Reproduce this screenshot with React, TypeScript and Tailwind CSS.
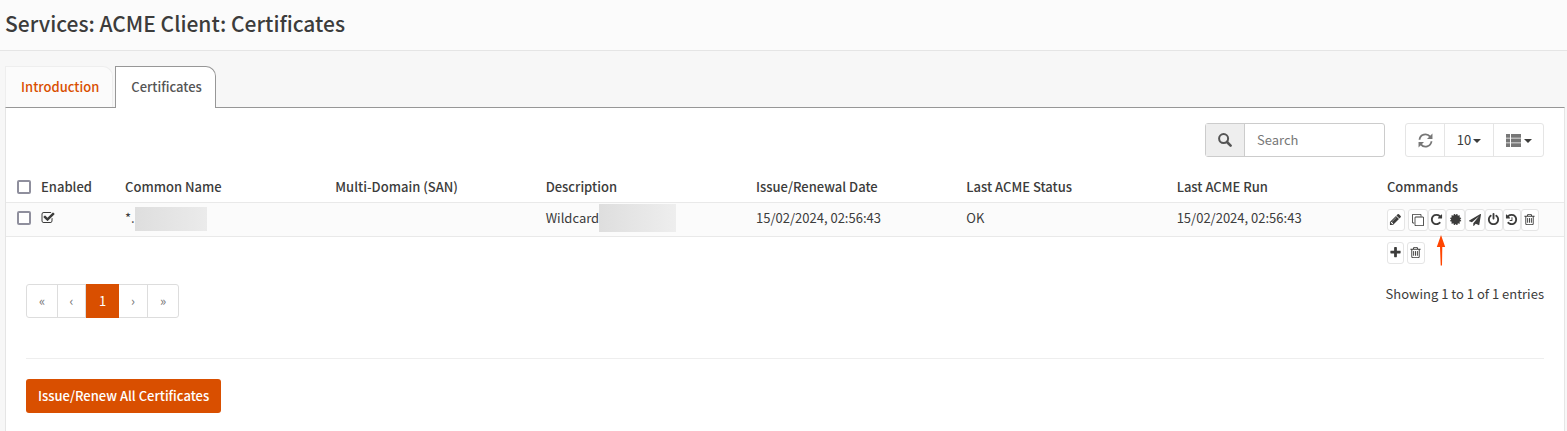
import React from "react";

type IconProps = { d: string; size?: string };

function Icon({ d, size = "size-[13px]" }: IconProps) {
  return (
    <svg viewBox="0 0 1792 1792" className={`${size} shrink-0`} fill="currentColor" aria-hidden="true">
      <path d={d} />
    </svg>
  );
}

const TRASH =
  "M704 736v576q0 14-9 23t-23 9h-64q-14 0-23-9t-9-23v-576q0-14 9-23t23-9h64q14 0 23 9t9 23zm256 0v576q0 14-9 23t-23 9h-64q-14 0-23-9t-9-23v-576q0-14 9-23t23-9h64q14 0 23 9t9 23zm256 0v576q0 14-9 23t-23 9h-64q-14 0-23-9t-9-23v-576q0-14 9-23t23-9h64q14 0 23 9t9 23zm128 724v-948h-896v948q0 22 7 40.5t14.5 27 10.5 8.5h832q3 0 10.5-8.5t14.5-27 7-40.5zm-672-1076h448l-48-117q-7-9-17-11h-317q-10 2-17 11zm928 32v64q0 14-9 23t-23 9h-96v948q0 83-47 143.5t-113 60.5h-832q-66 0-113-58.5t-47-141.5v-952h-96q-14 0-23-9t-9-23v-64q0-14 9-23t23-9h309l70-167q15-37 54-63t79-26h320q40 0 79 26t54 63l70 167h309q14 0 23 9t9 23z";
const PENCIL =
  "M491 1536l91-91-235-235-91 91v107h128v128h107zm523-928q0-22-22-22-10 0-17 7l-542 542q-7 7-7 17 0 22 22 22 10 0 17-7l542-542q7-7 7-17zm-54-192l416 416-832 832h-416v-416zm683 96q0 53-37 90l-166 166-416-416 166-165q36-38 90-38 53 0 91 38l235 234q37 39 37 91z";
const CLONE =
  "M1664 1632v-1088q0-13-9.5-22.5t-22.5-9.5h-1088q-13 0-22.5 9.5t-9.5 22.5v1088q0 13 9.5 22.5t22.5 9.5h1088q13 0 22.5-9.5t9.5-22.5zm128-1088v1088q0 66-47 113t-113 47h-1088q-66 0-113-47t-47-113v-1088q0-66 47-113t113-47h1088q66 0 113 47t47 113zm-384-384v160h-128v-160q0-13-9.5-22.5t-22.5-9.5h-1088q-13 0-22.5 9.5t-9.5 22.5v1088q0 13 9.5 22.5t22.5 9.5h160v128h-160q-66 0-113-47t-47-113v-1088q0-66 47-113t113-47h1088q66 0 113 47t47 113z";
const REPEAT =
  "M1664 256v448q0 26-19 45t-45 19h-448q-42 0-59-40-17-39 14-69l138-138q-148-137-349-137-104 0-198.5 40.5t-163.5 109.5-109.5 163.5-40.5 198.5 40.5 198.5 109.5 163.5 163.5 109.5 198.5 40.5q119 0 225-52t179-147q7-10 23-12 15 0 25 9l137 138q9 8 9.5 20.5t-7.5 22.5q-109 132-264 204.5t-327 72.5q-156 0-298-61t-245-164-164-245-61-298 61-298 164-245 245-164 298-61q147 0 284.5 55.5t244.5 156.5l130-129q29-31 70-14 39 17 39 59z";
const CERTIFICATE =
  "M1522 896l138 135q30 28 20 70-12 41-52 51l-188 48 53 186q12 41-19 70-29 31-70 19l-186-53-48 188q-10 40-51 52-12 2-19 2-31 0-51-22l-135-138-135 138q-28 30-70 20-41-11-51-52l-48-188-186 53q-41 12-70-19-31-29-19-70l53-186-188-48q-40-10-52-51-10-42 20-70l138-135-138-135q-30-28-20-70 12-41 52-51l188-48-53-186q-12-41 19-70 29-31 70-19l186 53 48-188q10-41 51-51 41-12 70 19l135 139 135-139q29-30 70-19 41 10 51 51l48 188 186-53q41-12 70 19 31 29 19 70l-53 186 188 48q40 10 52 51 10 42-20 70z";
const PLANE =
  "M1764 11q33 24 27 64l-256 1536q-5 29-32 45-14 8-31 8-11 0-24-5l-453-185-242 295q-18 23-49 23-13 0-22-4-19-7-30.5-23.5t-11.5-36.5v-349l864-1059-1069 925-395-162q-37-14-40-55-2-40 32-59l1664-960q15-9 32-9 20 0 36 11z";
const POWER =
  "M1664 896q0 156-61 298t-164 245-245 164-298 61-298-61-245-164-164-245-61-298q0-182 80.5-343t226.5-270q43-32 95.5-25t83.5 50q32 42 24.5 94.5t-49.5 84.5q-98 74-151.5 181t-53.5 228q0 104 40.5 198.5t109.5 163.5 163.5 109.5 198.5 40.5 198.5-40.5 163.5-109.5 109.5-163.5 40.5-198.5q0-121-53.5-228t-151.5-181q-42-32-49.5-84.5t24.5-94.5q31-43 84-50t95 25q146 109 226.5 270t80.5 343zm-640-768v640q0 52-38 90t-90 38-90-38-38-90v-640q0-52 38-90t90-38 90 38 38 90z";
const HISTORY =
  "M1664 896q0 156-61 298t-164 245-245 164-298 61q-172 0-327-72.5t-264-204.5q-7-10-6.5-22.5t8.5-20.5l137-138q10-9 25-9 16 2 23 12 73 95 179 147t225 52q104 0 198.5-40.5t163.5-109.5 109.5-163.5 40.5-198.5-40.5-198.5-109.5-163.5-163.5-109.5-198.5-40.5q-98 0-188 35.5t-160 101.5l137 138q31 30 14 69-17 40-59 40h-448q-26 0-45-19t-19-45v-448q0-42 40-59 39-17 69 14l130 129q107-101 244.5-156.5t284.5-55.5q156 0 298 61t245 164 164 245 61 298zm-640-288v448q0 14-9 23t-23 9h-320q-14 0-23-9t-9-23v-64q0-14 9-23t23-9h224v-352q0-14 9-23t23-9h64q14 0 23 9t9 23z";
const PLUS =
  "M1600 736v192q0 40-28 68t-68 28h-416v416q0 40-28 68t-68 28h-192q-40 0-68-28t-28-68v-416h-416q-40 0-68-28t-28-68v-192q0-40 28-68t68-28h416v-416q0-40 28-68t68-28h192q40 0 68 28t28 68v416h416q40 0 68 28t28 68z";
const CHECK =
  "M1472 930v318q0 119-84.5 203.5t-203.5 84.5h-832q-119 0-203.5-84.5t-84.5-203.5v-832q0-119 84.5-203.5t203.5-84.5h832q63 0 117 25 15 7 18 23 3 17-9 29l-49 49q-10 10-23 10-3 0-9-2-23-6-45-6h-832q-66 0-113 47t-47 113v832q0 66 47 113t113 47h832q66 0 113-47t47-113v-254q0-13 9-22l64-64q10-10 23-10 6 0 12 3 20 8 20 29zm231-489l-814 814q-24 24-57 24t-57-24l-430-430q-24-24-24-57t24-57l110-110q24-24 57-24t57 24l263 263 647-647q24-24 57-24t57 24l110 110q24 24 24 57t-24 57z";

const COMMANDS = [
  { label: "Edit", d: PENCIL, box: "w-[18px] mr-[3px]" },
  { label: "Clone", d: CLONE, box: "w-5", size: "size-3" },
  { label: "Issue or renew", d: REPEAT, box: "w-[18px]" },
  { label: "Revoke", d: CERTIFICATE, box: "w-[19px]" },
  { label: "Run automations", d: PLANE, box: "w-5", size: "size-3" },
  { label: "Reset", d: POWER, box: "w-[18px]" },
  { label: "Import", d: HISTORY, box: "w-[18px]" },
  { label: "Delete", d: TRASH, box: "w-[18px]" },
];

const ICON_BUTTON =
  "inline-flex h-[22px] shrink-0 items-center justify-center rounded-[3px] border border-[#e5e5e5] bg-white text-[#3c3c3b]";
const CHECKBOX = "block size-[14px] appearance-none rounded-[2px] border-2 border-[#8f8f9d] bg-white";
const CELL = "px-[5px] text-left align-top";

function Caret() {
  return <span className="mt-[2px] border-x-4 border-t-4 border-x-transparent border-t-[#3c3c3b]" />;
}

function Arrow() {
  return (
    <svg viewBox="0 0 10 32" className="absolute left-[49px] top-[26px] h-8 w-[10px]" aria-hidden="true">
      <path d="M5 0L9.2 12H6.3L6 30.5H4.7L4 12H.8z" fill="#ff4500" />
    </svg>
  );
}

export default function App() {
  const headings = ["Common Name", "Multi-Domain (SAN)", "Description", "Issue/Renewal Date", "Last ACME Status", "Last ACME Run", "Commands"];
  return (
    <div className="flex min-h-screen flex-col bg-[#f7f7f7] font-['Source_Sans_Pro','Noto_Sans_CJK_SC',sans-serif] text-[13px] leading-5 text-[#3c3c3b]">
      <header className="border-b border-[#e5e5e5] bg-[#fbfbfb] px-[5px] pb-3 pt-2">
        <h1 className="text-[21px] font-medium leading-[30px]">Services: ACME Client: Certificates</h1>
      </header>
      <main className="flex grow flex-col pl-[5px] pr-[2px] pt-[15px]">
        <nav className="flex items-end gap-[2px]">
          <a href="#introduction" className="rounded-tr-[10px] border border-b-0 border-[#eeeeee] bg-[#fbfbfb] py-[10px] pl-[15px] pr-[13px] font-medium text-[#d94f00]">
            Introduction
          </a>
          <a href="#certificates" className="relative -mb-px rounded-tr-[10px] border border-b-0 border-[#979797] bg-white pb-[11px] pl-[15px] pr-[13px] pt-[10px] font-medium text-[#555555]">
            Certificates
          </a>
        </nav>
        <section className="grow border-x border-t border-x-[#e5e5e5] border-t-[#979797] bg-white">
          <div className="flex justify-end gap-5 px-5 py-[15px]">
            <div className="flex h-[34px] w-[180px] rounded-[3px] border border-[#cccccc]">
              <label htmlFor="search" aria-label="Search" className="flex w-[39px] shrink-0 items-center justify-center border-r border-[#cccccc] bg-[#eeeeee] text-[#555555]">
                <svg viewBox="0 0 14 14" className="size-[14px]" aria-hidden="true">
                  <circle cx="5.6" cy="5.6" r="4.5" fill="none" stroke="currentColor" strokeWidth="2" />
                  <path d="M9 9l3.6 3.6" stroke="currentColor" strokeWidth="2.6" strokeLinecap="round" />
                </svg>
              </label>
              <input id="search" type="text" placeholder="Search" className="min-w-0 grow px-3 outline-none placeholder:text-[#777777]" />
            </div>
            <div className="flex h-[34px] divide-x divide-[#e5e5e5] rounded-[3px] border border-[#e5e5e5]">
              <button type="button" aria-label="Refresh" className="flex w-[39px] items-center justify-center text-[#777777]">
                <svg viewBox="0 0 14 14" className="size-[15px]" fill="none" stroke="currentColor" strokeWidth="1.7" aria-hidden="true">
                  <path d="M1.4 6.3A5.6 5.6 0 0 1 11.3 3.4M12.6 7.7A5.6 5.6 0 0 1 2.7 10.6" />
                  <path d="M13.5 .5V5.6H8.4zM.5 13.5V8.4H5.6z" fill="currentColor" stroke="none" />
                </svg>
              </button>
              <button type="button" className="flex w-[49px] items-center justify-center gap-[2px]">
                10 <Caret />
              </button>
              <button type="button" aria-label="Columns" className="flex w-[49px] items-center justify-center gap-[3px] text-[#777777]">
                <svg viewBox="0 0 15 13" className="h-[13px] w-[15px]" fill="currentColor" aria-hidden="true">
                  <path d="M0 0h4v3.7H0zM5 0h10v3.7H5zM0 4.6h4v3.8H0zM5 4.6h10v3.8H5zM0 9.3h4V13H0zM5 9.3h10V13H5z" />
                </svg>
                <Caret />
              </button>
            </div>
          </div>
          <table className="w-full table-fixed border-collapse">
            <colgroup>
              <col className="w-[30px]" />
              <col className="w-[84px]" />
              <col className="w-[13.5%]" />
              <col className="w-[13.5%]" />
              <col className="w-[13.5%]" />
              <col className="w-[13.5%]" />
              <col className="w-[13.5%]" />
              <col className="w-[13.5%]" />
              <col />
            </colgroup>
            <thead>
              <tr className="h-[30px]">
                <th className="pl-[11px] pt-2 align-top">
                  <input type="checkbox" aria-label="Select all" className={CHECKBOX} />
                </th>
                <th className={`${CELL} pt-[5px] font-medium`}>Enabled</th>
                {headings.map((h) => (
                  <th key={h} className={`${CELL} pt-[5px] font-medium`}>{h}</th>
                ))}
              </tr>
            </thead>
            <tbody>
              <tr className="h-[34px] border-y border-[#e9e9e9] bg-[#fbfbfb]">
                <td className="pl-[11px] pt-2 align-top">
                  <input type="checkbox" aria-label="Select certificate" className={CHECKBOX} />
                </td>
                <td className={`${CELL} pt-2`}><Icon d={CHECK} size="size-[14px]" /></td>
                <td className={CELL}>
                  <div className="flex items-start pt-1">
                    <span className="pt-px">*.</span>
                    <span className="h-6 w-[72px] bg-linear-to-r from-[#dedede] to-[#ebebeb]" />
                  </div>
                </td>
                <td className={CELL} />
                <td className={CELL}>
                  <div className="flex items-start pt-px">
                    <span className="pt-1">Wildcard</span>
                    <span className="h-7 w-[77px] bg-linear-to-r from-[#dedede] to-[#eeeeee]" />
                  </div>
                </td>
                <td className={`${CELL} pt-[5px]`}>15/02/2024, 02:56:43</td>
                <td className={`${CELL} pt-[5px]`}>OK</td>
                <td className={`${CELL} pt-[5px]`}>15/02/2024, 02:56:43</td>
                <td className={`${CELL} pt-[6px]`}>
                  <div className="relative flex">
                    {COMMANDS.map((c) => (
                      <button key={c.label} type="button" aria-label={c.label} className={`${ICON_BUTTON} ${c.box}`}>
                        <Icon d={c.d} size={c.size} />
                      </button>
                    ))}
                    <Arrow />
                  </div>
                </td>
              </tr>
            </tbody>
            <tfoot>
              <tr className="h-[34px]">
                <td colSpan={8} />
                <td className={`${CELL} pt-[5px]`}>
                  <div className="flex gap-[3px]">
                    <button type="button" aria-label="Add" className={`${ICON_BUTTON} w-[17px]`}><Icon d={PLUS} /></button>
                    <button type="button" aria-label="Delete selected" className={`${ICON_BUTTON} w-[18px]`}><Icon d={TRASH} /></button>
                  </div>
                </td>
              </tr>
            </tfoot>
          </table>
          <div className="px-5 pt-[14px]">
            <div className="flex items-start justify-between">
              <nav aria-label="Pages" className="flex h-[34px] divide-x divide-[#dddddd] rounded-[3px] border border-[#dddddd] text-[#777777]">
                <a href="#first" className="flex w-[31px] items-center justify-center">«</a>
                <a href="#prev" className="flex w-[28px] items-center justify-center">‹</a>
                <a href="#1" aria-current="page" className="-my-px flex w-[33px] items-center justify-center border-r-0 bg-[#d94f00] text-white">1</a>
                <a href="#next" className="flex w-[29px] items-center justify-center">›</a>
                <a href="#last" className="flex w-[30px] items-center justify-center">»</a>
              </nav>
              <p>Showing 1 to 1 of 1 entries</p>
            </div>
            <hr className="mt-10 border-[#eeeeee]" />
            <button type="button" className="mt-5 rounded-[3px] bg-[#d94f00] px-3 py-[7px] font-medium text-white">
              Issue/Renew All Certificates
            </button>
          </div>
        </section>
      </main>
    </div>
  );
}
